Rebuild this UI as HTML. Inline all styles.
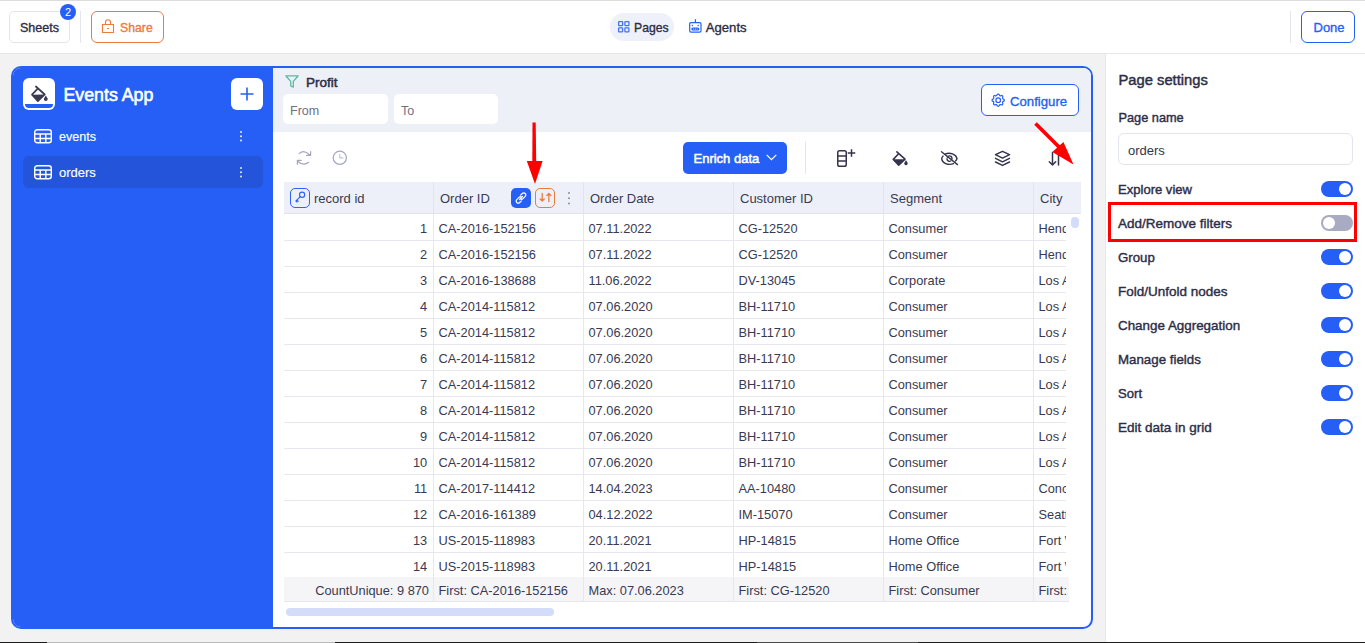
<!DOCTYPE html>
<html><head><meta charset="utf-8">
<style>
*{box-sizing:border-box;margin:0;padding:0}
html,body{width:1365px;height:643px;overflow:hidden}
body{position:relative;background:#f2f2f2;font-family:"Liberation Sans",sans-serif;color:#2d2d46}
.a{position:absolute}
.t{position:absolute;white-space:nowrap;line-height:1}
.b{font-weight:700}
.sb{font-weight:400;-webkit-text-stroke:0.4px currentColor}
.c{font-size:12.8px;color:#393a51}
.h{font-size:13px;color:#393a51}
svg{position:absolute;overflow:visible}
</style></head><body>

<!-- top header -->
<div class="a" style="left:0;top:0;width:1365px;height:54px;background:#fff;border-top:1px solid #dcdddc;border-bottom:1px solid #e4e6ee"></div>
<div class="a" style="left:9px;top:11px;width:61px;height:32px;border:1px solid #e2e4ec;border-radius:5px"></div>
<div class="t" style="left:20px;top:22.32px;font-size:12.5px;-webkit-text-stroke:0.35px currentColor">Sheets</div>
<div class="a" style="left:60px;top:4px;width:16px;height:16px;border-radius:8px;background:#265ff5;color:#fff;font-size:11px;line-height:16px;text-align:center">2</div>
<div class="a" style="left:80px;top:11px;width:1px;height:32px;background:#e4e6ee"></div>
<div class="a" style="left:91px;top:11px;width:73px;height:32px;border:1px solid #ec7a3c;border-radius:6px"></div>
<svg style="left:102px;top:19px" width="12" height="14" viewBox="0 0 12 14"><path d="M0.5 5.5h11v8h-11z M3.5 5.5v-2.2a2.5 2.5 0 0 1 5 0v2.2 M5 9.5h2" fill="none" stroke="#ec7a3c" stroke-width="1.1"/></svg>
<div class="t" style="left:120px;top:21.53px;font-size:12.25px;-webkit-text-stroke:0.35px currentColor;color:#ec7a3c">Share</div>

<div class="a" style="left:610px;top:13px;width:64px;height:28px;border-radius:14px;background:#eef0fa"></div>
<svg style="left:618px;top:21px" width="12" height="12" viewBox="0 0 12 12"><g fill="none" stroke="#4a72f5" stroke-width="1.3"><rect x="0.6" y="0.6" width="4" height="4" rx="0.6"/><rect x="6.9" y="0.6" width="4" height="4" rx="0.6"/><rect x="0.6" y="6.9" width="4" height="4" rx="0.6"/><rect x="6.9" y="6.9" width="4" height="4" rx="0.6"/></g></svg>
<div class="t" style="left:634px;top:21.57px;font-size:12.2px;-webkit-text-stroke:0.35px currentColor">Pages</div>
<svg style="left:688px;top:18px" width="15" height="16" viewBox="0 0 15 16"><g fill="none" stroke="#265ff5" stroke-width="1.2"><rect x="1.7" y="4.6" width="11.3" height="9.5" rx="1.3"/><path d="M7.4 1.3v3.3"/></g><circle cx="4.4" cy="7.5" r="0.75" fill="#265ff5"/><circle cx="10.2" cy="7.5" r="0.75" fill="#265ff5"/><rect x="3.3" y="9.4" width="8.1" height="3.1" rx="1.5" fill="#265ff5"/><circle cx="5.6" cy="11" r="0.6" fill="#fff"/><circle cx="7.4" cy="11" r="0.6" fill="#fff"/><circle cx="9.2" cy="11" r="0.6" fill="#fff"/></svg>
<div class="t" style="left:705.8px;top:20.81px;font-size:13.1px;-webkit-text-stroke:0.35px currentColor">Agents</div>

<div class="a" style="left:1290px;top:11px;width:1px;height:32px;background:#e4e6ee"></div>
<div class="a" style="left:1301px;top:11px;width:54px;height:32px;border:1px solid #265ff5;border-radius:6px"></div>
<div class="t" style="left:1313.5px;top:20.90px;font-size:13.0px;-webkit-text-stroke:0.35px currentColor;color:#265ff5">Done</div>

<!-- main container -->
<div class="a" style="left:11px;top:66px;width:1082px;height:563px;border:2px solid #265ff5;border-radius:10px;background:#fff;overflow:hidden">
</div>
<div class="a" style="left:13px;top:68px;width:260px;height:559px;background:#265ff5;border-radius:8px 0 0 8px"></div>
<!-- sidebar -->
<div class="a" style="left:23px;top:78px;width:32px;height:32px;background:#fff;border-radius:6px;overflow:hidden">
  <div class="a" style="left:2px;top:26px;width:28px;height:4px;background:#265ff5;border-radius:0 0 5px 5px"></div>
</div>
<svg style="left:23px;top:78px" width="32" height="32" viewBox="0 0 32 32"><path d="M12.9 8.5L21.75 16.5 M14.5 10.9L9 16.7L14.9 23.1L21.75 16.5" fill="none" stroke="#3a3a52" stroke-width="1.7" stroke-linejoin="round" stroke-linecap="round"/><path d="M9 16.7L21.75 16.5L14.9 23.1z" fill="#3a3a52"/><path d="M22.8 17.4L24.6 20.6A1.9 1.9 0 1 1 21 20.6z" fill="#3a3a52"/></svg>
<div class="t" style="left:63.5px;top:86.97px;font-size:17.75px;-webkit-text-stroke:0.6px currentColor;color:#fff">Events App</div>
<div class="a" style="left:231px;top:78px;width:32px;height:32px;background:#fff;border-radius:6px"></div>
<svg style="left:239px;top:86px" width="16" height="16" viewBox="0 0 16 16"><path d="M8 1.5v13 M1.5 8h13" stroke="#265ff5" stroke-width="1.6"/></svg>

<div class="a" style="left:23px;top:156px;width:240px;height:32px;background:#2354d9;border-radius:6px"></div>
<svg style="left:34px;top:129px" width="18" height="15" viewBox="0 0 18 15"><g fill="none" stroke="#fff" stroke-width="1.4"><rect x="0.7" y="0.7" width="16.6" height="13.1" rx="2.5"/><path d="M0.7 5h16.6 M0.7 9.5h16.6 M6.2 5v8.8 M11.8 5v8.8"/></g></svg>
<div class="t" style="left:59px;top:131px;font-size:12.6px;color:#fff;-webkit-text-stroke:0.15px #fff">events</div>
<div class="a" style="left:240px;top:130.6px;width:2px;height:2px;background:#e8ecfd;border-radius:1px;box-shadow:0 4.3px 0 #e8ecfd,0 8.6px 0 #e8ecfd"></div>
<svg style="left:34px;top:165px" width="18" height="15" viewBox="0 0 18 15"><g fill="none" stroke="#fff" stroke-width="1.4"><rect x="0.7" y="0.7" width="16.6" height="13.1" rx="2.5"/><path d="M0.7 5h16.6 M0.7 9.5h16.6 M6.2 5v8.8 M11.8 5v8.8"/></g></svg>
<div class="t" style="left:59px;top:166px;font-size:13px;color:#fff;-webkit-text-stroke:0.15px #fff">orders</div>
<div class="a" style="left:240px;top:166.6px;width:2px;height:2px;background:#e8ecfd;border-radius:1px;box-shadow:0 4.3px 0 #e8ecfd,0 8.6px 0 #e8ecfd"></div>

<!-- filter panel -->
<div class="a" style="left:273px;top:68px;width:818px;height:64px;background:#eef0f8;border-radius:0 8px 0 0"></div>
<svg style="left:285px;top:75px" width="14" height="13" viewBox="0 0 14 13"><path d="M0.8 0.8h12.4l-4.9 5.6v5.8l-2.6-1.2v-4.6z" fill="none" stroke="#5fb8a2" stroke-width="1.3" stroke-linejoin="round"/></svg>
<div class="t" style="left:306px;top:75.87px;font-size:13.5px;-webkit-text-stroke:0.5px currentColor">Profit</div>
<div class="a" style="left:283px;top:94px;width:105px;height:30px;background:#fff;border-radius:5px"></div>
<div class="t" style="left:290px;top:104.50px;font-size:12.5px;color:#6e7083">From</div>
<div class="a" style="left:394px;top:94px;width:104px;height:30px;background:#fff;border-radius:5px"></div>
<div class="t" style="left:401px;top:104.50px;font-size:12.5px;color:#6e7083">To</div>
<div class="a" style="left:981px;top:84px;width:98px;height:32px;background:#fff;border:1px solid #265ff5;border-radius:6px"></div>
<svg style="left:989.8px;top:91.6px" width="16.4" height="16.4" viewBox="0 0 24 24"><g fill="none" stroke="#265ff5" stroke-width="1.75" stroke-linecap="round" stroke-linejoin="round"><path d="M10.325 4.317c.426 -1.756 2.924 -1.756 3.35 0a1.724 1.724 0 0 0 2.573 1.066c1.543 -.94 3.31 .826 2.37 2.37a1.724 1.724 0 0 0 1.065 2.572c1.756 .426 1.756 2.924 0 3.35a1.724 1.724 0 0 0 -1.066 2.573c.94 1.543 -.826 3.31 -2.37 2.37a1.724 1.724 0 0 0 -2.572 1.065c-.426 1.756 -2.924 1.756 -3.35 0a1.724 1.724 0 0 0 -2.573 -1.066c-1.543 .94 -3.31 -.826 -2.37 -2.37a1.724 1.724 0 0 0 -1.065 -2.572c-1.756 -.426 -1.756 -2.924 0 -3.35a1.724 1.724 0 0 0 1.066 -2.573c-.94 -1.543 .826 -3.31 2.37 -2.37c1 .608 2.296 .07 2.572 -1.065z"/><circle cx="12" cy="12" r="3.4"/></g></svg>
<div class="t" style="left:1010px;top:94.83px;font-size:13.2px;-webkit-text-stroke:0.35px currentColor;color:#265ff5">Configure</div>

<!-- toolbar -->
<svg style="left:294px;top:148px" width="20" height="20" viewBox="0 0 20 20"><g fill="none" stroke="#a3a6bd" stroke-width="1.2" stroke-linecap="round" stroke-linejoin="round"><path d="M5.1 5.6Q10 1.2 15.8 7 M16.6 3.7V7.4H12.6 M14.6 14.3Q9.5 18.6 3.6 13.2 M3.4 16.3V12.3H7.2"/></g></svg>
<svg style="left:332px;top:150px" width="16" height="16" viewBox="0 0 16 16"><circle cx="7.8" cy="7.8" r="6.6" fill="none" stroke="#a3a6bd" stroke-width="1.2"/><path d="M7.8 4.2v3.6h3.6" fill="none" stroke="#c3c5d5" stroke-width="1.2"/></svg>
<div class="a" style="left:683px;top:142px;width:104px;height:32px;background:#265ff5;border-radius:5px"></div>
<div class="t" style="left:693.5px;top:152.20px;font-size:13.0px;-webkit-text-stroke:0.5px currentColor;color:#fff">Enrich data</div>
<svg style="left:766px;top:154px" width="11" height="7" viewBox="0 0 11 7"><path d="M0.7 0.8l4.8 4.8 4.8-4.8" fill="none" stroke="#fff" stroke-width="1.2"/></svg>
<div class="a" style="left:805px;top:142px;width:1px;height:32px;background:#e4e6ee"></div>
<svg style="left:836px;top:148px" width="22" height="20" viewBox="0 0 22 20"><g fill="none" stroke="#34344e" stroke-width="1.5"><rect x="1.75" y="2.75" width="8.5" height="15.5" rx="1.8"/><path d="M1.75 8h8.5 M1.75 13h8.5 M15.5 1.2v7.6 M11.7 5h7.6"/></g></svg>
<svg style="left:884.6px;top:143.7px" width="29.44" height="29.44" viewBox="0 0 32 32"><path d="M12.9 8.5L21.75 16.5 M14.5 10.9L9 16.7L14.9 23.1L21.75 16.5" fill="none" stroke="#34344e" stroke-width="1.7" stroke-linejoin="round" stroke-linecap="round"/><path d="M9 16.7L21.75 16.5L14.9 23.1z" fill="#34344e"/><path d="M22.8 17.4L24.6 20.6A1.9 1.9 0 1 1 21 20.6z" fill="#34344e"/></svg>
<svg style="left:940px;top:150px" width="19" height="17" viewBox="0 0 19 17"><g fill="none" stroke="#34344e" stroke-width="1.4" stroke-linecap="round"><path d="M5 4.2a8 6 0 0 1 12 4.3a8 6 0 0 1-1.5 2.5 M13.5 13.6a8 6 0 0 1-11.8-5a8 6 0 0 1 1.3-2.5"/><path d="M7.3 7.2a2.5 2.5 0 0 1 4.6 1.8 M10.7 11a2.5 2.5 0 0 1-3.7-2.3"/><path d="M1.5 1.8l16 12.8"/></g></svg>
<svg style="left:994px;top:150px" width="17" height="17" viewBox="0 0 17 17"><g fill="none" stroke="#34344e" stroke-width="1.5" stroke-linejoin="round" stroke-linecap="round"><path d="M8.5 1.3l7 3.4-7 3.4-7-3.4z M1.5 8.4l7 3.4 7-3.4 M1.5 12l7 3.4 7-3.4"/></g></svg>
<svg style="left:1047px;top:150px" width="14" height="17" viewBox="0 0 14 17"><g fill="none" stroke="#34344e" stroke-width="1.5" stroke-linecap="round" stroke-linejoin="round"><path d="M5.5 2.5v12.5 M2.3 11.8l3.2 3.2 3.2-3.2 M11.5 15v-12.5"/></g></svg>

<!-- grid header -->
<div class="a" style="left:284px;top:182px;width:797px;height:32px;background:#eef0f9;border-bottom:1px solid #e2e4ec"></div>
<div class="a" style="left:433px;top:182px;width:1px;height:32px;background:#e2e4ec"></div>
<div class="a" style="left:583px;top:182px;width:1px;height:32px;background:#e2e4ec"></div>
<div class="a" style="left:733px;top:182px;width:1px;height:32px;background:#e2e4ec"></div>
<div class="a" style="left:883px;top:182px;width:1px;height:32px;background:#e2e4ec"></div>
<div class="a" style="left:1033px;top:182px;width:1px;height:32px;background:#e2e4ec"></div>
<div class="a" style="left:290px;top:188px;width:20px;height:20px;border:1px solid #2f63f5;border-radius:5px"></div>
<svg style="left:290px;top:188px" width="20" height="20" viewBox="0 0 20 20"><g fill="none" stroke="#2f63f5" stroke-width="1.15" stroke-linecap="round" stroke-linejoin="round"><circle cx="12.1" cy="6.7" r="2.6"/><path d="M10.3 8.6L6 12.9 M6.9 12l1.3 1.3 M5.9 13l1 1"/></g></svg>
<div class="t h" style="left:314px;top:192.3px">record id</div>
<div class="t h" style="left:440px;top:192.3px">Order ID</div>
<div class="a" style="left:511px;top:188px;width:20px;height:20px;background:#265ff5;border-radius:5px"></div>
<svg style="left:511px;top:188px" width="20" height="20" viewBox="0 0 20 20"><g fill="none" stroke="#fff" stroke-width="1.2" stroke-linecap="round"><path d="M9.6 7.2l1.7-1.7a2 2 0 0 1 2.9 2.9l-2.2 2.2a2 2 0 0 1-2.6 0.2 M10.4 12.8l-1.7 1.7a2 2 0 0 1-2.9-2.9l2.2-2.2a2 2 0 0 1 2.6-0.2 M8.5 11.5l3-3"/></g></svg>
<div class="a" style="left:535px;top:188px;width:20px;height:20px;border:1px solid #ec7a3c;border-radius:5px"></div>
<svg style="left:535px;top:188px" width="20" height="20" viewBox="0 0 20 20"><g fill="none" stroke="#ec7a3c" stroke-width="1.3" stroke-linecap="round" stroke-linejoin="round"><path d="M7.2 5.5v7.5 M5.2 11l2 2 2-2 M13.9 13.5v-7.5 M11.9 7.5l2-2 2 2"/></g></svg>
<div class="a" style="left:568px;top:191.6px;width:2.4px;height:2.4px;background:#8a8ea3;border-radius:50%;box-shadow:0 5.2px 0 #8a8ea3,0 10.4px 0 #8a8ea3"></div>
<div class="t h" style="left:590px;top:192.3px">Order Date</div>
<div class="t h" style="left:740px;top:192.3px">Customer ID</div>
<div class="t h" style="left:890px;top:192.3px">Segment</div>
<div class="t h" style="left:1040px;top:192.3px">City</div>
<div class="a" style="left:284px;top:214px;width:785px;height:388px;overflow:hidden">
<div class="a" style="left:0;top:26px;width:782px;height:1px;background:#e7e8ee"></div>
<div class="a" style="left:0;top:52px;width:782px;height:1px;background:#e7e8ee"></div>
<div class="a" style="left:0;top:78px;width:782px;height:1px;background:#e7e8ee"></div>
<div class="a" style="left:0;top:104px;width:782px;height:1px;background:#e7e8ee"></div>
<div class="a" style="left:0;top:130px;width:782px;height:1px;background:#e7e8ee"></div>
<div class="a" style="left:0;top:156px;width:782px;height:1px;background:#e7e8ee"></div>
<div class="a" style="left:0;top:182px;width:782px;height:1px;background:#e7e8ee"></div>
<div class="a" style="left:0;top:208px;width:782px;height:1px;background:#e7e8ee"></div>
<div class="a" style="left:0;top:234px;width:782px;height:1px;background:#e7e8ee"></div>
<div class="a" style="left:0;top:260px;width:782px;height:1px;background:#e7e8ee"></div>
<div class="a" style="left:0;top:286px;width:782px;height:1px;background:#e7e8ee"></div>
<div class="a" style="left:0;top:312px;width:782px;height:1px;background:#e7e8ee"></div>
<div class="a" style="left:0;top:338px;width:782px;height:1px;background:#e7e8ee"></div>
<div class="a" style="left:0;top:364px;width:782px;height:1px;background:#e7e8ee"></div>
<div class="a" style="left:149px;top:0;width:1px;height:388px;background:#e7e8ee"></div>
<div class="a" style="left:299px;top:0;width:1px;height:388px;background:#e7e8ee"></div>
<div class="a" style="left:449px;top:0;width:1px;height:388px;background:#e7e8ee"></div>
<div class="a" style="left:599px;top:0;width:1px;height:388px;background:#e7e8ee"></div>
<div class="a" style="left:749px;top:0;width:1px;height:388px;background:#e7e8ee"></div>
<div class="t c" style="right:641.8px;top:9.16px">1</div>
<div class="t c" style="left:154.5px;top:9.16px">CA-2016-152156</div>
<div class="t c" style="left:304.5px;top:9.16px">07.11.2022</div>
<div class="t c" style="left:454.5px;top:9.16px">CG-12520</div>
<div class="t c" style="left:604.5px;top:9.16px">Consumer</div>
<div class="t c" style="left:754.5px;top:9.16px">Henderson</div>
<div class="t c" style="right:641.8px;top:35.16px">2</div>
<div class="t c" style="left:154.5px;top:35.16px">CA-2016-152156</div>
<div class="t c" style="left:304.5px;top:35.16px">07.11.2022</div>
<div class="t c" style="left:454.5px;top:35.16px">CG-12520</div>
<div class="t c" style="left:604.5px;top:35.16px">Consumer</div>
<div class="t c" style="left:754.5px;top:35.16px">Henderson</div>
<div class="t c" style="right:641.8px;top:61.16px">3</div>
<div class="t c" style="left:154.5px;top:61.16px">CA-2016-138688</div>
<div class="t c" style="left:304.5px;top:61.16px">11.06.2022</div>
<div class="t c" style="left:454.5px;top:61.16px">DV-13045</div>
<div class="t c" style="left:604.5px;top:61.16px">Corporate</div>
<div class="t c" style="left:754.5px;top:61.16px">Los Angeles</div>
<div class="t c" style="right:641.8px;top:87.16px">4</div>
<div class="t c" style="left:154.5px;top:87.16px">CA-2014-115812</div>
<div class="t c" style="left:304.5px;top:87.16px">07.06.2020</div>
<div class="t c" style="left:454.5px;top:87.16px">BH-11710</div>
<div class="t c" style="left:604.5px;top:87.16px">Consumer</div>
<div class="t c" style="left:754.5px;top:87.16px">Los Angeles</div>
<div class="t c" style="right:641.8px;top:113.16px">5</div>
<div class="t c" style="left:154.5px;top:113.16px">CA-2014-115812</div>
<div class="t c" style="left:304.5px;top:113.16px">07.06.2020</div>
<div class="t c" style="left:454.5px;top:113.16px">BH-11710</div>
<div class="t c" style="left:604.5px;top:113.16px">Consumer</div>
<div class="t c" style="left:754.5px;top:113.16px">Los Angeles</div>
<div class="t c" style="right:641.8px;top:139.16px">6</div>
<div class="t c" style="left:154.5px;top:139.16px">CA-2014-115812</div>
<div class="t c" style="left:304.5px;top:139.16px">07.06.2020</div>
<div class="t c" style="left:454.5px;top:139.16px">BH-11710</div>
<div class="t c" style="left:604.5px;top:139.16px">Consumer</div>
<div class="t c" style="left:754.5px;top:139.16px">Los Angeles</div>
<div class="t c" style="right:641.8px;top:165.16px">7</div>
<div class="t c" style="left:154.5px;top:165.16px">CA-2014-115812</div>
<div class="t c" style="left:304.5px;top:165.16px">07.06.2020</div>
<div class="t c" style="left:454.5px;top:165.16px">BH-11710</div>
<div class="t c" style="left:604.5px;top:165.16px">Consumer</div>
<div class="t c" style="left:754.5px;top:165.16px">Los Angeles</div>
<div class="t c" style="right:641.8px;top:191.16px">8</div>
<div class="t c" style="left:154.5px;top:191.16px">CA-2014-115812</div>
<div class="t c" style="left:304.5px;top:191.16px">07.06.2020</div>
<div class="t c" style="left:454.5px;top:191.16px">BH-11710</div>
<div class="t c" style="left:604.5px;top:191.16px">Consumer</div>
<div class="t c" style="left:754.5px;top:191.16px">Los Angeles</div>
<div class="t c" style="right:641.8px;top:217.16px">9</div>
<div class="t c" style="left:154.5px;top:217.16px">CA-2014-115812</div>
<div class="t c" style="left:304.5px;top:217.16px">07.06.2020</div>
<div class="t c" style="left:454.5px;top:217.16px">BH-11710</div>
<div class="t c" style="left:604.5px;top:217.16px">Consumer</div>
<div class="t c" style="left:754.5px;top:217.16px">Los Angeles</div>
<div class="t c" style="right:641.8px;top:243.16px">10</div>
<div class="t c" style="left:154.5px;top:243.16px">CA-2014-115812</div>
<div class="t c" style="left:304.5px;top:243.16px">07.06.2020</div>
<div class="t c" style="left:454.5px;top:243.16px">BH-11710</div>
<div class="t c" style="left:604.5px;top:243.16px">Consumer</div>
<div class="t c" style="left:754.5px;top:243.16px">Los Angeles</div>
<div class="t c" style="right:641.8px;top:269.16px">11</div>
<div class="t c" style="left:154.5px;top:269.16px">CA-2017-114412</div>
<div class="t c" style="left:304.5px;top:269.16px">14.04.2023</div>
<div class="t c" style="left:454.5px;top:269.16px">AA-10480</div>
<div class="t c" style="left:604.5px;top:269.16px">Consumer</div>
<div class="t c" style="left:754.5px;top:269.16px">Concord</div>
<div class="t c" style="right:641.8px;top:295.16px">12</div>
<div class="t c" style="left:154.5px;top:295.16px">CA-2016-161389</div>
<div class="t c" style="left:304.5px;top:295.16px">04.12.2022</div>
<div class="t c" style="left:454.5px;top:295.16px">IM-15070</div>
<div class="t c" style="left:604.5px;top:295.16px">Consumer</div>
<div class="t c" style="left:754.5px;top:295.16px">Seattle</div>
<div class="t c" style="right:641.8px;top:321.16px">13</div>
<div class="t c" style="left:154.5px;top:321.16px">US-2015-118983</div>
<div class="t c" style="left:304.5px;top:321.16px">20.11.2021</div>
<div class="t c" style="left:454.5px;top:321.16px">HP-14815</div>
<div class="t c" style="left:604.5px;top:321.16px">Home Office</div>
<div class="t c" style="left:754.5px;top:321.16px">Fort Worth</div>
<div class="t c" style="right:641.8px;top:347.16px">14</div>
<div class="t c" style="left:154.5px;top:347.16px">US-2015-118983</div>
<div class="t c" style="left:304.5px;top:347.16px">20.11.2021</div>
<div class="t c" style="left:454.5px;top:347.16px">HP-14815</div>
<div class="t c" style="left:604.5px;top:347.16px">Home Office</div>
<div class="t c" style="left:754.5px;top:347.16px">Fort Worth</div>
<div class="a" style="left:0;top:363px;width:785px;height:25px;background:#f5f5f7;border-bottom:1px solid #e7e8ee"></div>
<div class="a" style="left:149px;top:363px;width:1px;height:25px;background:#e7e8ee"></div>
<div class="a" style="left:299px;top:363px;width:1px;height:25px;background:#e7e8ee"></div>
<div class="a" style="left:449px;top:363px;width:1px;height:25px;background:#e7e8ee"></div>
<div class="a" style="left:599px;top:363px;width:1px;height:25px;background:#e7e8ee"></div>
<div class="a" style="left:749px;top:363px;width:1px;height:25px;background:#e7e8ee"></div>
<div class="t c" style="right:640px;top:370.66px">CountUnique: 9 870</div>
<div class="t c" style="left:154.5px;top:370.66px">First: CA-2016-152156</div>
<div class="t c" style="left:304.5px;top:370.66px">Max: 07.06.2023</div>
<div class="t c" style="left:454.5px;top:370.66px">First: CG-12520</div>
<div class="t c" style="left:604.5px;top:370.66px">First: Consumer</div>
<div class="t c" style="left:754.5px;top:370.66px">First: Henderson</div>
<div class="a" style="left:782px;top:0;width:3px;height:363px;background:#fff"></div>
</div>
<div class="a" style="left:1071px;top:217px;width:8px;height:11px;background:#d3dcf8;border-radius:4px"></div>
<div class="a" style="left:286px;top:608px;width:268px;height:8px;background:#d3dcf8;border-radius:4px"></div>

<!-- red arrows -->
<svg style="left:0;top:0" width="1365" height="643" viewBox="0 0 1365 643"><g fill="#ff0000"><path d="M532.5 122.5h3.2l0.5 39h-3.9z"/><path d="M526.8 161h15.8l-7.6 23z"/><path d="M1034.2 124.8L1036.8 122.2L1062.3 147.7L1059.7 150.3z"/><path d="M1063.4 142l-11.1 10 21.2 12.6z"/></g></svg>


<!-- right panel -->
<div class="a" style="left:1105px;top:54px;width:260px;height:589px;background:#fff;border-left:1px solid #e6e7ec"></div>
<div class="t" style="left:1118.5px;top:72.51px;font-size:14.75px;-webkit-text-stroke:0.45px currentColor">Page settings</div>
<div class="t" style="left:1118.5px;top:112.21px;font-size:12.75px;-webkit-text-stroke:0.4px currentColor">Page name</div>
<div class="a" style="left:1118px;top:133px;width:235px;height:32px;border:1px solid #e3e5ec;border-radius:6px"></div>
<div class="t" style="left:1128px;top:143.8px;font-size:13px;color:#34344c">orders</div>
<div class="t sb" style="left:1118px;top:182.96px;font-size:13.05px">Explore view</div>
<div class="a" style="left:1321px;top:181px;width:32px;height:16px;border-radius:8px;background:#265ff5"></div>
<div class="a" style="left:1339px;top:183px;width:12px;height:12px;border-radius:6px;background:#fff"></div>
<div class="t sb" style="left:1118px;top:216.57px;font-size:13.5px">Add/Remove filters</div>
<div class="a" style="left:1321px;top:215px;width:32px;height:16px;border-radius:8px;background:#a8abc2"></div>
<div class="a" style="left:1323px;top:217px;width:12px;height:12px;border-radius:6px;background:#fff"></div>
<div class="t sb" style="left:1118px;top:250.78px;font-size:13.25px">Group</div>
<div class="a" style="left:1321px;top:249px;width:32px;height:16px;border-radius:8px;background:#265ff5"></div>
<div class="a" style="left:1339px;top:251px;width:12px;height:12px;border-radius:6px;background:#fff"></div>
<div class="t sb" style="left:1118px;top:284.57px;font-size:13.5px">Fold/Unfold nodes</div>
<div class="a" style="left:1321px;top:283px;width:32px;height:16px;border-radius:8px;background:#265ff5"></div>
<div class="a" style="left:1339px;top:285px;width:12px;height:12px;border-radius:6px;background:#fff"></div>
<div class="t sb" style="left:1118px;top:318.65px;font-size:13.4px">Change Aggregation</div>
<div class="a" style="left:1321px;top:317px;width:32px;height:16px;border-radius:8px;background:#265ff5"></div>
<div class="a" style="left:1339px;top:319px;width:12px;height:12px;border-radius:6px;background:#fff"></div>
<div class="t sb" style="left:1118px;top:352.74px;font-size:13.3px">Manage fields</div>
<div class="a" style="left:1321px;top:351px;width:32px;height:16px;border-radius:8px;background:#265ff5"></div>
<div class="a" style="left:1339px;top:353px;width:12px;height:12px;border-radius:6px;background:#fff"></div>
<div class="t sb" style="left:1118px;top:386.91px;font-size:13.1px">Sort</div>
<div class="a" style="left:1321px;top:385px;width:32px;height:16px;border-radius:8px;background:#265ff5"></div>
<div class="a" style="left:1339px;top:387px;width:12px;height:12px;border-radius:6px;background:#fff"></div>
<div class="t sb" style="left:1118px;top:420.57px;font-size:13.5px">Edit data in grid</div>
<div class="a" style="left:1321px;top:419px;width:32px;height:16px;border-radius:8px;background:#265ff5"></div>
<div class="a" style="left:1339px;top:421px;width:12px;height:12px;border-radius:6px;background:#fff"></div>
<div class="a" style="left:1108px;top:202px;width:249px;height:40px;border:3px solid #ff0000"></div>

<!-- bottom edge -->
<div class="a" style="left:0;top:642px;width:1365px;height:1px;background:#1c1c1c"></div>
<div class="a" style="left:47px;top:642px;width:288px;height:1px;background:#b9b9b9"></div>
<div class="a" style="left:757px;top:642px;width:161px;height:1px;background:#4a4a4a"></div>
</body></html>
